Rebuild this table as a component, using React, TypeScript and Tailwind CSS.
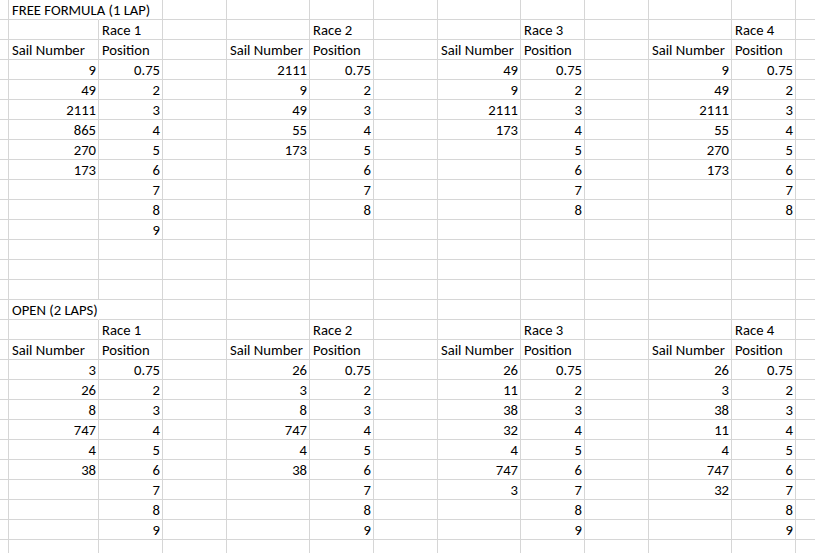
import React from "react";

type Race = { sail: string[]; pos: number };
type Section = { top: number; title: string; races: Race[] };

const SECTIONS: Section[] = [
  {
    top: 0,
    title: "FREE FORMULA (1 LAP)",
    races: [
      { sail: ["9", "49", "2111", "865", "270", "173"], pos: 9 },
      { sail: ["2111", "9", "49", "55", "173"], pos: 8 },
      { sail: ["49", "9", "2111", "173"], pos: 8 },
      { sail: ["9", "49", "2111", "55", "270", "173"], pos: 8 },
    ],
  },
  {
    top: 15,
    title: "OPEN (2 LAPS)",
    races: [
      { sail: ["3", "26", "8", "747", "4", "38"], pos: 9 },
      { sail: ["26", "3", "8", "747", "4", "38"], pos: 9 },
      { sail: ["26", "11", "38", "32", "4", "747", "3"], pos: 9 },
      { sail: ["26", "3", "38", "11", "4", "747", "32"], pos: 9 },
    ],
  },
];

const ROWS = 28;
const COLS = 13;

type Cell = { text: string; right: boolean; hideRight: boolean };

function build(): Cell[][] {
  const g: Cell[][] = Array.from({ length: ROWS }, () =>
    Array.from({ length: COLS }, () => ({ text: "", right: false, hideRight: false }))
  );
  const blocks = [
    [1, 2],
    [4, 5],
    [7, 8],
    [10, 11],
  ];
  for (const s of SECTIONS) {
    g[s.top][1] = { text: s.title, right: false, hideRight: true };
    s.races.forEach((r, i) => {
      const [sc, pc] = blocks[i];
      g[s.top + 1][pc] = { text: `Race ${i + 1}`, right: false, hideRight: false };
      g[s.top + 2][sc] = { text: "Sail Number", right: false, hideRight: false };
      g[s.top + 2][pc] = { text: "Position", right: false, hideRight: false };
      r.sail.forEach((v, k) => {
        g[s.top + 3 + k][sc] = { text: v, right: true, hideRight: false };
      });
      for (let k = 0; k < r.pos; k++) {
        g[s.top + 3 + k][pc] = {
          text: k === 0 ? "0.75" : String(k + 1),
          right: true,
          hideRight: false,
        };
      }
    });
  }
  return g;
}

export default function App() {
  const grid = build();
  return (
    <div className="w-[815px] h-[553px] overflow-hidden bg-white">
      <div className="grid grid-cols-[9px_90px_64px_64px_83px_64px_64px_83px_64px_64px_83px_64px_40px] auto-rows-[20px] font-['Carlito','Calibri','Lato',sans-serif] text-[14.67px] text-black">
        {grid.map((row, r) =>
          row.map((c, ci) => (
            <div
              key={`${r}-${ci}`}
              className={`h-[20px] border-b border-r border-b-[#d6d6d6] leading-[21px] whitespace-nowrap px-[2px] ${
                c.hideRight ? "border-r-white" : "border-r-[#d6d6d6]"
              } ${c.right ? "text-right" : "text-left pl-[3px]"}`}
            >
              {c.text}
            </div>
          ))
        )}
      </div>
    </div>
  );
}
